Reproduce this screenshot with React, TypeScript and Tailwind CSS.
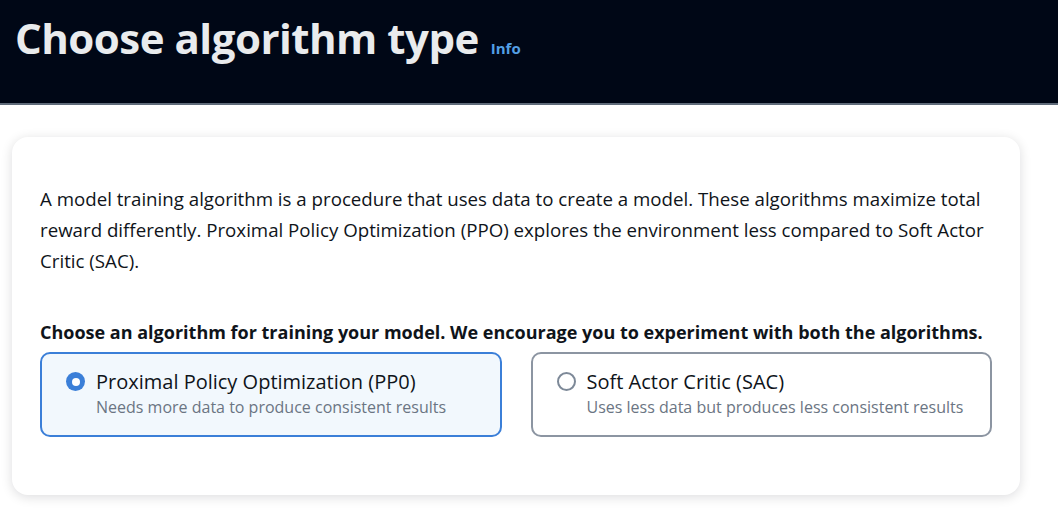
import React from "react";

function Radio({ checked }: { checked: boolean }) {
  return checked ? (
    <span className="mt-[3px] flex h-[19px] w-[19px] shrink-0 items-center justify-center rounded-full bg-[#3b7fd8]">
      <span className="h-[8px] w-[8px] rounded-full bg-white" />
    </span>
  ) : (
    <span className="mt-[3px] h-[19px] w-[19px] shrink-0 rounded-full border-2 border-[#7d8998] bg-white" />
  );
}

function Option({ checked, title, desc }: { checked: boolean; title: string; desc: string }) {
  return (
    <div
      className={
        "flex gap-[11px] rounded-[10px] border-2 pl-[24px] pt-[15px] pb-[16px] " +
        (checked ? "border-[#3b7fd8] bg-[#f2f8fd]" : "border-[#8c95a2] bg-white")
      }
    >
      <Radio checked={checked} />
      <div className="flex flex-col">
        <div className="text-[20px] leading-[26px] text-[#0f141a]">{title}</div>
        <div className="text-[16px] leading-[24px] text-[#6b7583]">{desc}</div>
      </div>
    </div>
  );
}

export default function App() {
  return (
    <div className="h-[508px] w-[1058px] overflow-hidden bg-white" style={{ fontFamily: '"Open Sans", "Noto Sans", sans-serif' }}>
      <div className="h-[105px] border-b-2 border-[#5f6b7a] bg-[#000716] pl-[15px] pt-[10px]">
        <div className="flex items-baseline gap-[12px]">
          <h1 className="text-[42px] font-bold leading-[56px] tracking-[-0.5px] text-[#e9ebed]">Choose algorithm type</h1>
          <span className="text-[15px] font-bold text-[#539fe5]">Info</span>
        </div>
      </div>
      <div className="px-[12px] pt-[32px]">
        <div className="w-[1008px] rounded-[16px] bg-white px-[28px] pt-[46px] pb-[58px] shadow-[0_2px_12px_rgba(0,7,22,0.14)]">
          <p className="text-[18.7px] leading-[31px] text-[#0f141a]">
            A model training algorithm is a procedure that uses data to create a model. These algorithms maximize total reward differently. Proximal Policy Optimization (PPO) explores the environment less compared to Soft Actor Critic (SAC).
          </p>
          <div className="mt-[44px] text-[18px] font-bold leading-[24px] text-[#0f141a]">
            Choose an algorithm for training your model. We encourage you to experiment with both the algorithms.
          </div>
          <div className="mt-[8px] grid w-[952px] grid-cols-2 gap-[29px]">
            <Option checked title="Proximal Policy Optimization (PP0)" desc="Needs more data to produce consistent results" />
            <Option checked={false} title="Soft Actor Critic (SAC)" desc="Uses less data but produces less consistent results" />
          </div>
        </div>
      </div>
    </div>
  );
}
